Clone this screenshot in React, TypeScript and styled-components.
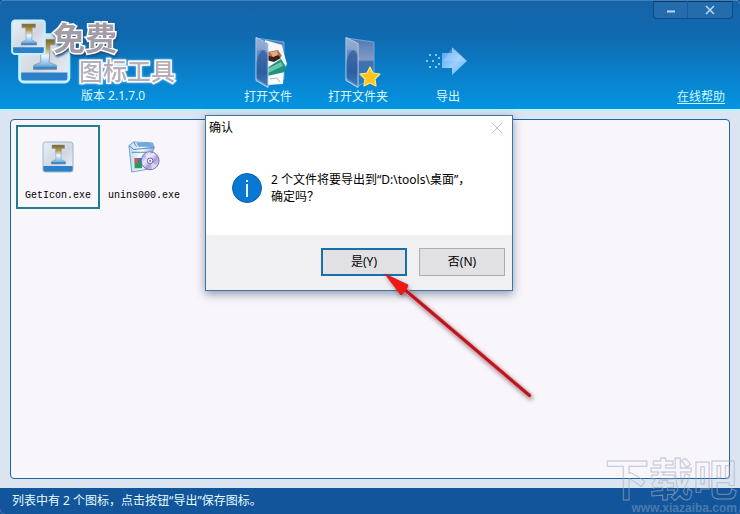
import React from "react";
import styled, { createGlobalStyle, css } from "styled-components";

const uiFont = `"Noto Sans", "Noto Sans CJK SC", sans-serif`;

const GlobalStyle = createGlobalStyle`
  * { box-sizing: border-box; }
  body { margin: 0; background: #12559a; font: 12px/16px ${uiFont}; color: #000; }
  button { font: inherit; padding: 0; border: 0; background: none; cursor: pointer; }
  svg { display: block; }
`;

const Window = styled.div`
  position: relative;
  display: flex;
  flex-direction: column;
  min-height: 100vh;
  overflow: hidden;
  border-radius: 5px;
  background: #dbe5f2;
`;

const Header = styled.header`
  display: flex;
  height: 111px;
  flex: none;
  background: linear-gradient(#1762a6, #0f6bb1 35%, #0a80cb 68%, #0494e2);
  border-top: 1px solid #3c83bd;
  border-bottom: 2px solid #b9f2ff;
`;

const Brand = styled.div`
  position: relative;
  width: 223px;
  flex: none;
`;

const LogoArt = styled.svg`
  margin: 17px 0 0 9px;
`;

const BrandLine = styled.span<{ $large?: boolean }>`
  position: absolute;
  white-space: nowrap;
  font-family: "Noto Sans CJK SC", sans-serif;
  paint-order: stroke fill;
  ${(p) =>
    p.$large
      ? css`
          left: 53px;
          top: 17px;
          font-size: 32px;
          line-height: 36px;
          font-weight: 700;
          color: #a19ca6;
          -webkit-text-stroke: 3px #fff;
          filter: drop-shadow(1px 2px 1px #234f7e);
        `
      : css`
          left: 79px;
          top: 55px;
          font-size: 24px;
          line-height: 28px;
          font-weight: 500;
          color: #b5aeb9;
          -webkit-text-stroke: 3px #fff;
          filter: drop-shadow(0 0 1px #9fdcff);
        `}
`;

const Version = styled.span`
  position: absolute;
  left: 81px;
  top: 87px;
  color: #d8fbff;
  white-space: nowrap;
`;

const Toolbar = styled.nav`
  display: flex;
  flex: 1;
  align-items: flex-end;
  padding-bottom: 4px;
`;

const ToolButton = styled.button`
  display: flex;
  flex-direction: column;
  align-items: center;
  width: 90px;
  color: #d8fbff;
`;

const HeaderSide = styled.div`
  display: flex;
  flex-direction: column;
  align-items: flex-end;
  justify-content: space-between;
  padding: 0 7px 4px 0;
`;

const WindowControls = styled.div`
  display: flex;
  height: 18px;
  border: 1px solid #0d4a87;
  border-top: 0;
  border-radius: 0 0 4px 4px;
  background: #246cab;
  box-shadow: inset 0 1px #0a3666;
`;

const WindowControl = styled.button<{ $width: number }>`
  display: flex;
  align-items: center;
  justify-content: center;
  width: ${(p) => p.$width}px;
  & + & { border-left: 1px solid #1b5a98; }
`;

const HelpLink = styled.a`
  margin-right: 8px;
  color: #c9fbff;
  text-decoration: underline;
  text-underline-offset: 2px;
`;

const Content = styled.main`
  display: flex;
  flex: 1;
  padding: 8px 10px 9px;
`;

const IconList = styled.div`
  display: flex;
  flex: 1;
  align-items: flex-start;
  gap: 2px;
  padding: 5px;
  border: 1px solid #20659d;
  border-radius: 4px;
  background: #f8f5fb;
`;

const IconItem = styled.button<{ $selected?: boolean }>`
  display: flex;
  flex-direction: column;
  align-items: center;
  gap: 15px;
  width: 84px;
  height: 84px;
  padding-top: 14px;
  border: 2px solid ${(p) => (p.$selected ? "#237b90" : "transparent")};
  font-family: "Liberation Mono", monospace;
  font-size: 10px;
  line-height: 16px;
`;

const StatusBar = styled.footer`
  flex: none;
  height: 26px;
  padding: 5px 12px;
  color: #e4fbff;
  background: #12559a;
`;

const Dialog = styled.section`
  position: absolute;
  left: 205px;
  top: 115px;
  width: 308px;
  border: 1px solid #3876ac;
  background: #fff;
  box-shadow: 0 3px 9px rgba(40, 60, 90, 0.5);
`;

const DialogTitleBar = styled.div`
  display: flex;
  justify-content: space-between;
  align-items: center;
  height: 24px;
  padding: 0 9px 0 3px;
`;

const DialogTitle = styled.h2`
  margin: 0;
  font: inherit;
`;

const DialogBody = styled.div`
  display: flex;
  align-items: center;
  gap: 9px;
  height: 95px;
  padding: 0 26px;
`;

const Message = styled.p`
  margin: 0;
  line-height: 17px;
  white-space: nowrap;
`;

const DialogActions = styled.div`
  display: flex;
  justify-content: flex-end;
  gap: 12px;
  padding: 13px 7px 14px;
  background: #f0eff2;
`;

const DialogButton = styled.button<{ $primary?: boolean }>`
  width: 86px;
  height: 28px;
  background: #e1e0e3;
  border: ${(p) => (p.$primary ? "2px solid #1670b0" : "1px solid #adadb0")};
`;

const Pointer = styled.svg`
  position: absolute;
  left: 380px;
  top: 270px;
  pointer-events: none;
  filter: drop-shadow(1px 2px 2px rgba(70, 30, 40, 0.5));
`;

const Watermark = styled.div`
  position: absolute;
  right: 3px;
  bottom: 0;
  display: flex;
  flex-direction: column;
  align-items: flex-end;
  gap: 2px;
  pointer-events: none;
  font-family: "Noto Sans CJK SC", sans-serif;
  font-weight: 700;
`;

const WatermarkName = styled.span`
  font-size: 44px;
  line-height: 46px;
  color: transparent;
  -webkit-text-stroke: 1px rgba(165, 172, 188, 0.65);
`;

const WatermarkUrl = styled.span`
  font: 700 12px/12px "Liberation Sans", sans-serif;
  color: rgba(130, 160, 195, 0.5);
`;

function Tile({ outline }: { outline?: string }) {
  return (
    <>
      <rect x="1" y="1" width="30" height="30" rx="2.5" fill="url(#tile)" />
      <path d="M1 25h30v4q0 2-2 2H3q-2 0-2-2z" fill="#2c80ca" />
      <rect x="1" y="1" width="30" height="30" rx="2.5" fill="none" stroke={outline || "#9db8cf"} strokeWidth={outline ? 1.8 : 1} />
      <path d="M10 4h12.500v3.500h-3L19 18.500l4.500 2V23h-14v-2.500l4.500-2-.5-11H10z" fill="url(#beam)" stroke="#7d96aa" strokeWidth=".5" />
      <path d="M9.500 21.300h14V23h-14z" fill="#4583b8" />
    </>
  );
}

function Logo() {
  return (
    <LogoArt width="64" height="70" viewBox="9 18 64 70" aria-hidden="true">
      <defs>
        <linearGradient id="tile" x1="0" y1="0" x2="1" y2="1">
          <stop stopColor="#e6f0f8" /><stop offset=".55" stopColor="#d2d6e1" /><stop offset="1" stopColor="#eef4fc" />
        </linearGradient>
        <linearGradient id="beam" x1="0" y1="0" x2="0" y2="1">
          <stop stopColor="#7a6326" /><stop offset=".3" stopColor="#b79b4c" /><stop offset=".55" stopColor="#eaf7ff" /><stop offset=".8" stopColor="#8fc6ea" /><stop offset="1" stopColor="#3d8ac7" />
        </linearGradient>
      </defs>
      <g transform="translate(18 33) scale(1.64 1.58)"><Tile outline="#c3f1ff" /></g>
      <g transform="translate(11 19.500) scale(1.09 1.11)"><Tile outline="#c3f1ff" /></g>
    </LogoArt>
  );
}

function Folder({ kind }: { kind: "file" | "folder" }) {
  const id = `pane-${kind}`;
  return (
    <svg width="48" height="54" viewBox="0 0 48 54" aria-hidden="true">
      <defs>
        <linearGradient id={id} x1="0" y1="0" x2="0" y2="1">
          <stop stopColor="#8ba4cf" /><stop offset=".3" stopColor="#6a8cc0" /><stop offset=".7" stopColor="#3f76b8" /><stop offset="1" stopColor="#7fb5e4" />
        </linearGradient>
        <linearGradient id={`${id}-back`} x1="0" y1="0" x2="0" y2="1">
          <stop stopColor="#5079b1" /><stop offset=".45" stopColor="#8299c6" /><stop offset=".5" stopColor="#426fae" /><stop offset="1" stopColor="#2b7cc5" />
        </linearGradient>
      </defs>
      <path d="M12 3l28 4v37l-17 7z" fill={`url(#${id}-back)`} stroke="#73b4e5" strokeWidth=".8" />
      {kind === "file" && (
        <>
          <path d="M21 5l17 5 2 9 3 10-3 7-1 13-16 1z" fill="#f3f7f8" />
          <path d="M23 17l11-2 4 6-8 5-8-4z" fill="#bd6a4a" />
          <path d="M22 20l7 2 5-2 3 3-7 4-8-2z" fill="#34231f" />
          <path d="M26 17l7-1 1 4-5 2z" fill="#e8a882" />
          <path d="M23 33l14-9 5 8-1 5-18 4z" fill="#1d927d" />
          <path d="M23 34l14-7 2 4-15 7z" fill="#66c7ae" />
          <path d="M24 42l12-3 3 8-15 2z" fill="#fff" />
          <path d="M26 44l7-1 3 4" fill="none" stroke="#a4b5c0" />
        </>
      )}
      <path d="M12 2.500l12 6v44l-12-7z" fill={`url(#${id})`} stroke="#b9d4f2" fillOpacity=".94" />
      <path d="M12.500 43V28q2-13 8-13 3 0 3 7v29z" fill="#17478b" opacity=".5" />
      <path d="M13 4l10 5v10q-5-7-10-3z" fill="#d1dcf1" opacity=".25" />
      {kind === "folder" && (
        <path d="M36 32l3 6 7 1-5 5 1 7-6-3-6 3 1-7-5-5 7-1z" fill="#ffc41d" stroke="#ffe980" strokeWidth="1.200" strokeLinejoin="round" />
      )}
    </svg>
  );
}

function ExportIcon() {
  return (
    <svg width="48" height="54" viewBox="0 0 48 54" aria-hidden="true">
      <defs>
        <linearGradient id="arrow" x1="0" y1="0" x2="1" y2="1">
          <stop stopColor="#4b9ded" /><stop offset=".55" stopColor="#9ccfff" /><stop offset="1" stopColor="#5ab5f6" />
        </linearGradient>
      </defs>
      <path d="M18 18h10v-6l15 14-15 14v-7H18z" fill="url(#arrow)" />
      <path d="M28 13l14 13H19" fill="#c7e6ff" opacity=".25" />
      <path d="M5 19h2v2H5zM11 19h2v2h-2zM2 25h2v2H2zM8 25h2v2H8zM14 22h2v2h-2zM14 28h2v2h-2zM5 31h2v2H5zM11 31h2v2h-2z" fill="#77cdf8" />
    </svg>
  );
}

function InstallerIcon() {
  return (
    <svg width="32" height="32" viewBox="0 0 34 34" aria-hidden="true">
      <defs>
        <linearGradient id="box" x1="0" y1="0" x2="1" y2="0">
          <stop stopColor="#b9daf2" /><stop offset=".5" stopColor="#f8fcff" /><stop offset="1" stopColor="#7eafe0" />
        </linearGradient>
        <linearGradient id="disc" x1="0" y1="0" x2="1" y2="1">
          <stop stopColor="#8280c8" /><stop offset=".4" stopColor="#eeeaff" /><stop offset=".6" stopColor="#a99bd6" /><stop offset="1" stopColor="#d9edff" />
        </linearGradient>
      </defs>
      <path d="M1 5l5-4 20 1 2 5-2 5v17L4 33z" fill="url(#box)" stroke="#6e9fcc" />
      <path d="M1 5l5 4 21-2M6 1l3 5M4 12h19v18" fill="none" stroke="#4e83bb" />
      <path d="M9 2h15l3 4H11z" fill="#6ea8df" />
      <path d="M7 18h8v11H7z" fill="#2a9b52" /><path d="M7 18h4v5H7z" fill="#de5643" /><path d="M11 18h4v5h-4z" fill="#287fc6" />
      <circle cx="23.500" cy="21" r="9.500" fill="url(#disc)" stroke="#7269af" />
      <path d="M23.500 21l-6-7q3-2.500 6-2.500zM23.500 21l7 5q-2 3-5 4z" fill="#fff" opacity=".45" />
      <circle cx="23.500" cy="21" r="3" fill="#f4f4ff" stroke="#665b9b" /><circle cx="23.500" cy="21" r="1" fill="#62649a" />
    </svg>
  );
}

export default function App() {
  return (
    <>
      <GlobalStyle />
      <Window>
        <Header>
          <Brand>
            <Logo />
            <BrandLine $large>免费</BrandLine>
            <BrandLine>图标工具</BrandLine>
            <Version>版本 2.1.7.0</Version>
          </Brand>
          <Toolbar>
            <ToolButton><Folder kind="file" />打开文件</ToolButton>
            <ToolButton><Folder kind="folder" />打开文件夹</ToolButton>
            <ToolButton><ExportIcon />导出</ToolButton>
          </Toolbar>
          <HeaderSide>
            <WindowControls>
              <WindowControl $width={33} aria-label="最小化">
                <svg width="10" height="10" viewBox="0 0 10 10"><path d="M1 6.500h8" stroke="#b5dcf8" strokeWidth="2" /></svg>
              </WindowControl>
              <WindowControl $width={45} aria-label="关闭">
                <svg width="10" height="10" viewBox="0 0 10 10"><path d="M1 1l8 8M9 1L1 9" stroke="#b5dcf8" strokeWidth="1.500" /></svg>
              </WindowControl>
            </WindowControls>
            <HelpLink href="#help">在线帮助</HelpLink>
          </HeaderSide>
        </Header>
        <Content>
          <IconList>
            <IconItem $selected>
              <svg width="32" height="32" viewBox="0 0 32 32" aria-hidden="true"><Tile /></svg>
              GetIcon.exe
            </IconItem>
            <IconItem>
              <InstallerIcon />
              unins000.exe
            </IconItem>
          </IconList>
        </Content>
        <StatusBar>列表中有 2 个图标，点击按钮“导出”保存图标。</StatusBar>

        <Dialog role="dialog" aria-labelledby="confirm-title">
          <DialogTitleBar>
            <DialogTitle id="confirm-title">确认</DialogTitle>
            <button aria-label="关闭对话框">
              <svg width="12" height="12" viewBox="0 0 12 12"><path d="M1 1l10 10M11 1L1 11" stroke="#c3c3c6" /></svg>
            </button>
          </DialogTitleBar>
          <DialogBody>
            <svg width="30" height="30" viewBox="0 0 30 30" aria-hidden="true">
              <circle cx="15" cy="15" r="14.500" fill="#0878d2" stroke="#0763b0" />
              <path d="M15 7v2M15 11v13" stroke="#fff" strokeWidth="1.800" />
            </svg>
            <Message>
              2 个文件将要导出到“D:\tools\桌面”，
              <br />
              确定吗？
            </Message>
          </DialogBody>
          <DialogActions>
            <DialogButton $primary>是(Y)</DialogButton>
            <DialogButton>否(N)</DialogButton>
          </DialogActions>
        </Dialog>

        <Pointer width="160" height="136" viewBox="380 270 160 136" aria-hidden="true">
          <path d="M404 289L529.500 395.500" stroke="#ed9a9c" strokeWidth="4.500" strokeLinecap="round" />
          <path d="M404 289L529.500 395.500" stroke="#b51620" strokeWidth="3" strokeLinecap="round" />
          <path d="M385 274l23 11-2 5-5 5z" fill="#f01612" stroke="#c91c1c" strokeWidth=".8" />
        </Pointer>
        <Watermark aria-hidden="true">
          <WatermarkName>下载吧</WatermarkName>
          <WatermarkUrl>www.xiazaiba.com</WatermarkUrl>
        </Watermark>
      </Window>
    </>
  );
}
